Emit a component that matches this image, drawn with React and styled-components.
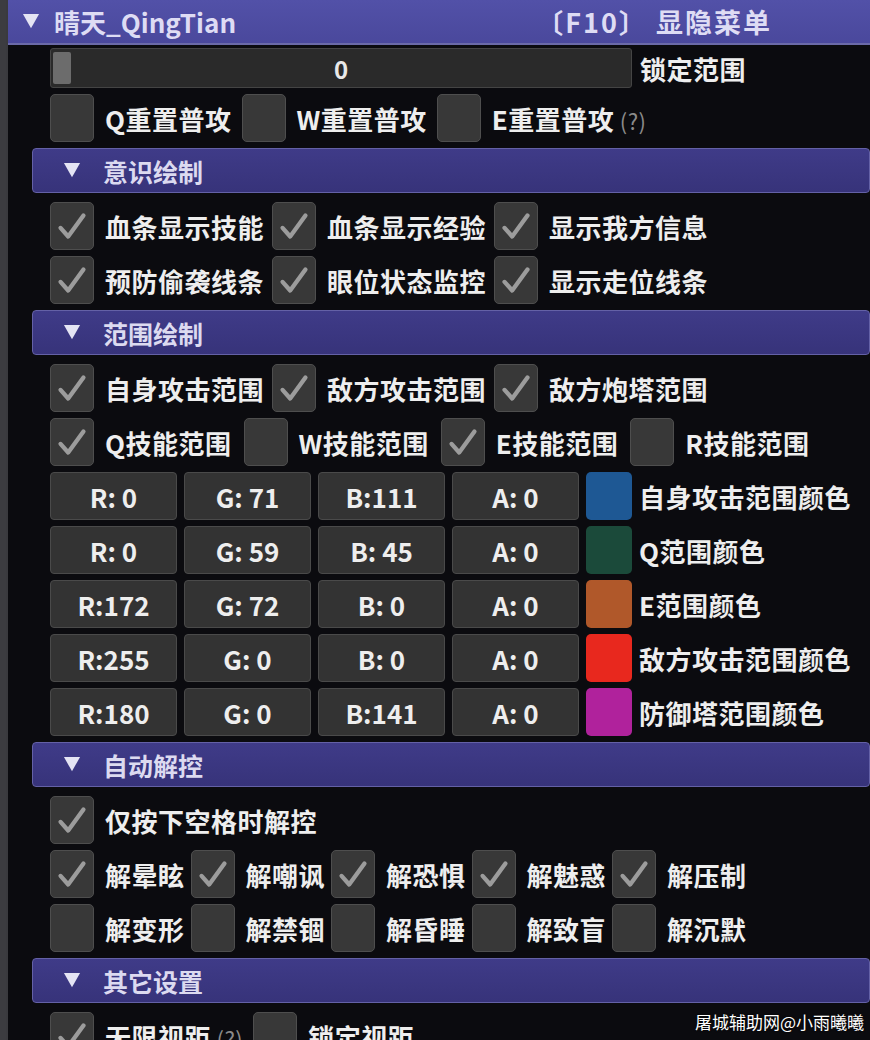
import React from 'react';
import styled, { createGlobalStyle } from 'styled-components';

const GlobalStyle = createGlobalStyle`
    html, body { margin: 0; padding: 0; }
    body {
        background: #3c3c40;
        overflow: hidden;
        font-family: "Noto Sans CJK SC", "Noto Sans", sans-serif;
    }
`;

const awareness = [
    [['血条显示技能', true], ['血条显示经验', true], ['显示我方信息', true]],
    [['预防偷袭线条', true], ['眼位状态监控', true], ['显示走位线条', true]],
];

// second row of range toggles sits a little wider apart
const ranges = [
    { spread: 8, items: [['自身攻击范围', true], ['敌方攻击范围', true], ['敌方炮塔范围', true]] },
    { spread: 12, items: [['Q技能范围', true], ['W技能范围', false], ['E技能范围', true], ['R技能范围', false]] },
];

const colors = [
    { r: 'R: 0', g: 'G: 71', b: 'B:111', a: 'A: 0', swatch: '#1e5894', label: '自身攻击范围颜色' },
    { r: 'R: 0', g: 'G: 59', b: 'B: 45', a: 'A: 0', swatch: '#1b4a3a', label: 'Q范围颜色' },
    { r: 'R:172', g: 'G: 72', b: 'B: 0', a: 'A: 0', swatch: '#b0582a', label: 'E范围颜色' },
    { r: 'R:255', g: 'G: 0', b: 'B: 0', a: 'A: 0', swatch: '#e8281e', label: '敌方攻击范围颜色' },
    { r: 'R:180', g: 'G: 0', b: 'B:141', a: 'A: 0', swatch: '#b0229c', label: '防御塔范围颜色' },
];

const cleanse = [
    [['解晕眩', true], ['解嘲讽', true], ['解恐惧', true], ['解魅惑', true], ['解压制', true]],
    [['解变形', false], ['解禁锢', false], ['解昏睡', false], ['解致盲', false], ['解沉默', false]],
];

const Arrow = ({ size = 18 }) => (
    <svg width={size} height={size * 0.9} viewBox="0 0 20 18">
        <polygon points="1,1 19,1 10,17" fill="#e4e4f4" />
    </svg>
);

const Check = () => (
    <svg width="44" height="48" viewBox="0 0 44 48">
        <polyline points="10,26 18,35 34,13" fill="none" stroke="#9c9c9c" strokeWidth="4.5"
            strokeLinecap="round" strokeLinejoin="round" />
    </svg>
);

const CheckItem = ({ label, checked, hint }) => (
    <Item>
        <Box>{checked && <Check />}</Box>
        <Label>{label}{hint && <Hint> (?)</Hint>}</Label>
    </Item>
);

const CheckRow = ({ items, spread }) => (
    <Row $spread={spread}>
        {items.map(([label, checked]) => (
            <CheckItem key={label} label={label} checked={checked} />
        ))}
    </Row>
);

const Header = ({ children }) => (
    <SectionHeader>
        <Arrow />
        <span>{children}</span>
    </SectionHeader>
);

export default () => (
    <>
        <GlobalStyle />
        <Window>
            <TitleBar>
                <TitleLeft>
                    <Arrow />
                    <span>晴天_QingTian</span>
                </TitleLeft>
                <TitleRight>〔F10〕 显隐菜单</TitleRight>
            </TitleBar>
            <Body>
                <SliderRow>
                    <Slider>
                        <Grab />
                        <SliderValue>0</SliderValue>
                    </Slider>
                    <Label>锁定范围</Label>
                </SliderRow>
                <Row $spread={10}>
                    <CheckItem label="Q重置普攻" />
                    <CheckItem label="W重置普攻" />
                    <CheckItem label="E重置普攻" hint />
                </Row>

                <Header>意识绘制</Header>
                {awareness.map((items, i) => <CheckRow key={i} items={items} />)}

                <Header>范围绘制</Header>
                {ranges.map((r, i) => <CheckRow key={i} items={r.items} spread={r.spread} />)}
                {colors.map(c => (
                    <ColorRow key={c.label}>
                        <Field>{c.r}</Field>
                        <Field>{c.g}</Field>
                        <Field>{c.b}</Field>
                        <Field>{c.a}</Field>
                        <Swatch $color={c.swatch} />
                        <Label>{c.label}</Label>
                    </ColorRow>
                ))}

                <Header>自动解控</Header>
                <Row>
                    <CheckItem label="仅按下空格时解控" checked />
                </Row>
                {cleanse.map((items, i) => <CheckRow key={i} items={items} spread={6} />)}

                <Header>其它设置</Header>
                <Row $spread={10}>
                    <CheckItem label="无限视距" checked hint />
                    <CheckItem label="锁定视距" />
                </Row>
            </Body>
            <Watermark>屠城辅助网@小雨曦曦</Watermark>
        </Window>
    </>
);

const Window = styled.div`
    margin-left: 6px;
    height: 1040px;
    background: #0b0b0f;
    border-left: 2px solid #3a3a3e;
    position: relative;
    overflow: hidden;
    color: #ececec;
`;
const TitleBar = styled.div`
    height: 45px;
    box-sizing: border-box;
    background: linear-gradient(#5251a8, #4a489c);
    border-bottom: 2px solid #6b6aa8;
    display: flex;
    align-items: center;
    padding: 0 98px 0 14px;
    font-size: 26px;
    font-weight: 700;
    color: #dedcf4;
`;
const TitleLeft = styled.div`
    display: flex;
    align-items: center;
    gap: 14px;
`;
const TitleRight = styled.div`
    margin-left: auto;
    font-size: 27px;
    letter-spacing: 2px;
    white-space: pre;
`;
const Body = styled.div`
    display: flex;
    flex-direction: column;
    gap: 6px;
    padding: 3px 0 0 24px;
`;
const Row = styled.div`
    display: flex;
    align-items: center;
    gap: ${p => p.$spread ?? 8}px;
    padding-left: 18px;
    height: 48px;
`;
const SliderRow = styled(Row)`
    height: 40px;
`;
const Item = styled.div`
    display: flex;
    align-items: center;
    gap: 11px;
`;
const Box = styled.div`
    width: 44px;
    height: 48px;
    box-sizing: border-box;
    background: #383838;
    border: 1px solid #4e4e4e;
    border-radius: 5px;
    display: flex;
    align-items: center;
    justify-content: center;
    svg { display: block; }
`;
const Label = styled.span`
    font-size: 26px;
    font-weight: 700;
    color: #eeeeee;
    white-space: nowrap;
    letter-spacing: 0.5px;
`;
const Hint = styled.span`
    font-size: 22px;
    font-weight: 400;
    color: #8a8a8a;
`;
const Slider = styled.div`
    width: 582px;
    height: 40px;
    box-sizing: border-box;
    background: #2a2a2a;
    border: 1px solid #444;
    border-radius: 3px;
    position: relative;
    display: flex;
    align-items: center;
    justify-content: center;
`;
const Grab = styled.div`
    position: absolute;
    left: 2px;
    top: 3px;
    bottom: 3px;
    width: 18px;
    background: #6c6c6c;
    border-radius: 2px;
`;
const SliderValue = styled.span`
    font-size: 24px;
    font-weight: 700;
    color: #e8e8e8;
`;
const SectionHeader = styled.div`
    height: 45px;
    box-sizing: border-box;
    margin-bottom: 3px;
    background: linear-gradient(#3f3b88, #37337a);
    border: 1px solid #6461a6;
    border-radius: 4px;
    display: flex;
    align-items: center;
    gap: 22px;
    padding-left: 30px;
    font-size: 25px;
    font-weight: 700;
    color: #dcdaf0;
`;
const ColorRow = styled.div`
    display: grid;
    grid-template-columns: repeat(4, 127px) 46px auto;
    gap: 7px;
    align-items: center;
    padding-left: 18px;
    height: 48px;
`;
const Field = styled.div`
    height: 48px;
    box-sizing: border-box;
    background: #333333;
    border: 1px solid #4a4a4a;
    border-radius: 4px;
    display: flex;
    align-items: center;
    justify-content: center;
    font-size: 26px;
    font-weight: 700;
    color: #eeeeee;
    white-space: pre;
`;
const Swatch = styled.div`
    height: 48px;
    border-radius: 5px;
    background: ${p => p.$color};
`;
const Watermark = styled.div`
    position: absolute;
    right: 6px;
    bottom: 6px;
    font-size: 17px;
    color: #ffffff;
    text-shadow: 0 0 2px #000;
`;
